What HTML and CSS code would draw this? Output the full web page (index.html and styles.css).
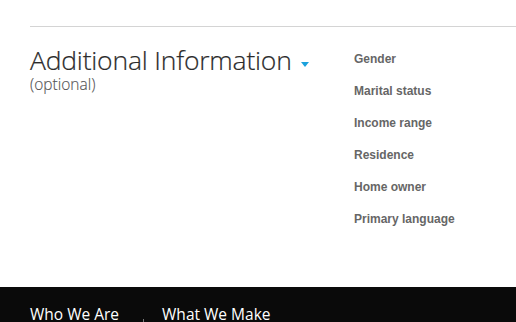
FILE: index.html
```html
<!DOCTYPE html>
<html lang="en">
<head>
  <meta charset="UTF-8">
  <title>Additional Information</title>
  <link rel="stylesheet" href="styles.css">
</head>
<body>
  <div class="section">
    <div class="intro">
      <h2 class="title">Additional Information <span class="caret"></span></h2>
      <p class="note">(optional)</p>
    </div>
    <ul class="fields">
      <li>Gender</li>
      <li>Marital status</li>
      <li>Income range</li>
      <li>Residence</li>
      <li>Home owner</li>
      <li>Primary language</li>
    </ul>
  </div>
  <footer class="footer">
    <a href="#">Who We Are</a>
    <span class="sep"></span>
    <a href="#">What We Make</a>
  </footer>
</body>
</html>
```

FILE: styles.css
```css
* {
  box-sizing: border-box;
  margin: 0;
  padding: 0;
}

body {
  width: 516px;
  height: 322px;
  overflow: hidden;
  background: #fff;
  font-family: "Open Sans", sans-serif;
}

.section {
  margin: 26px 0 0 30px;
  border-top: 1px solid #d4d4d4;
  display: flex;
  height: 261px;
}

.intro {
  width: 324px;
  padding-top: 17px;
}

.title {
  font-weight: 300;
  font-size: 26.5px;
  line-height: 32px;
  color: #2b2b2b;
  letter-spacing: -0.2px;
  -webkit-text-stroke: 0.2px #2b2b2b;
}

.caret {
  display: inline-block;
  width: 0;
  height: 0;
  margin-left: 3px;
  vertical-align: 3px;
  border-left: 4px solid transparent;
  border-right: 4px solid transparent;
  border-top: 5px solid #1ba1dc;
}

.note {
  font-weight: 300;
  font-size: 15.5px;
  line-height: 17px;
  color: #555;
  -webkit-text-stroke: 0.15px #555;
}

.fields {
  list-style: none;
  padding-top: 24px;
  font-family: "Liberation Sans", Arial, sans-serif;
  font-weight: bold;
  font-size: 12px;
  color: #666;
}

.fields li {
  line-height: 16px;
  margin-bottom: 16px;
}

.footer {
  background: #0a0a0a;
  height: 35px;
  display: flex;
  align-items: flex-end;
  padding-left: 30px;
}

.footer a {
  color: #fff;
  text-decoration: none;
  font-size: 15.5px;
  line-height: 17px;
  margin-bottom: -1px;
}

.sep {
  width: 1px;
  height: 3px;
  background: #777;
  margin: 0 18px 0 24px;
}
```
